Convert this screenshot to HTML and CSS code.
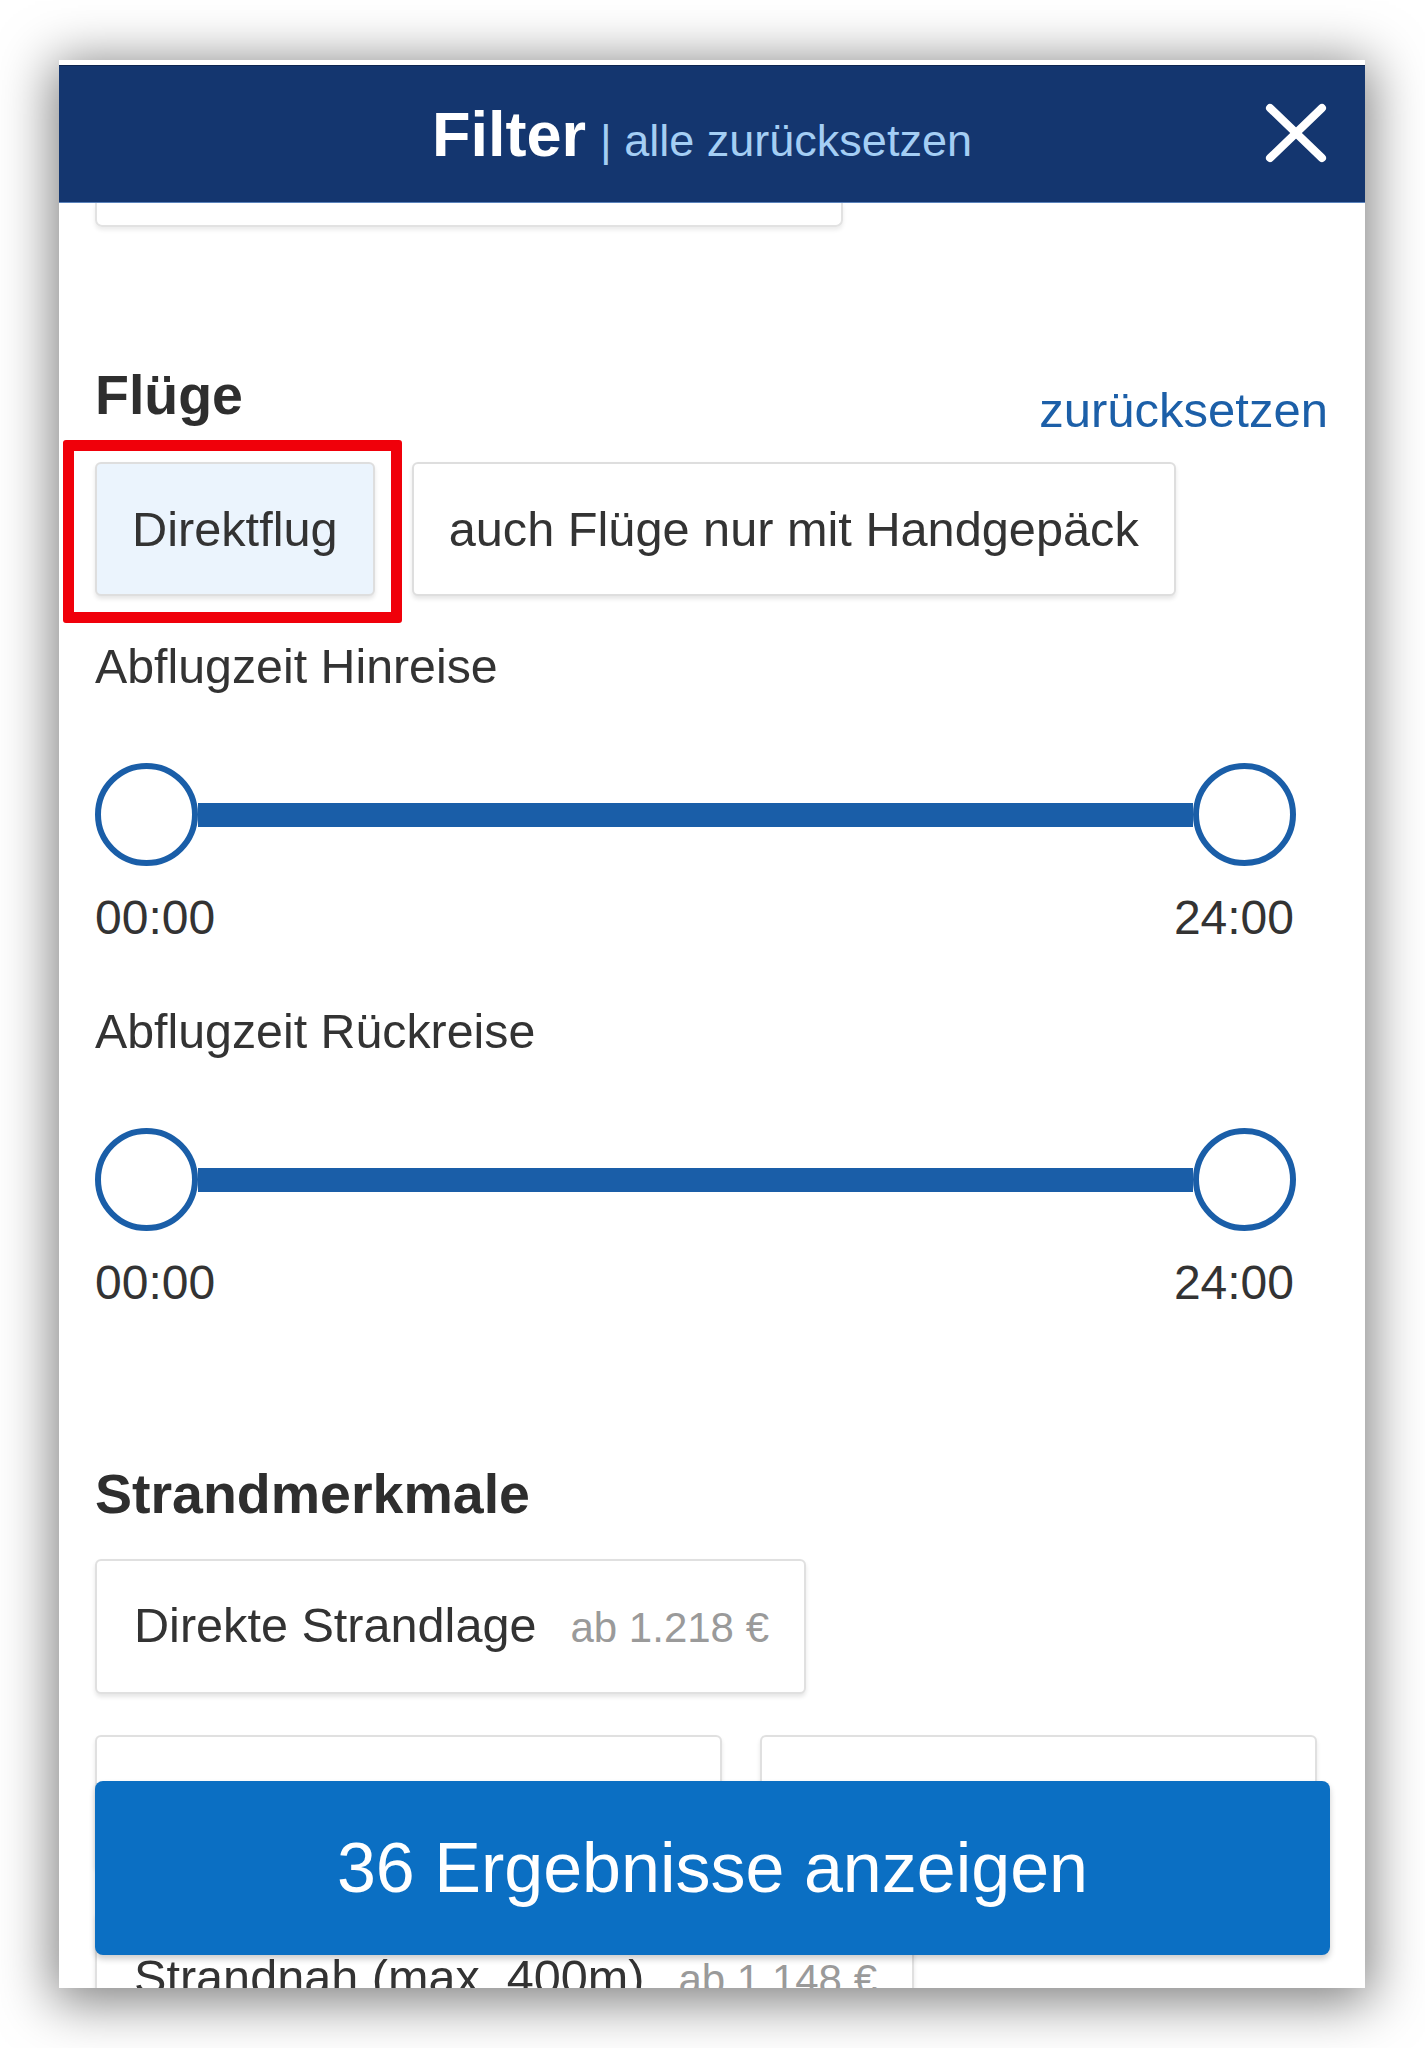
FILE: index.html
```html
<!DOCTYPE html>
<html lang="de">
<head>
<meta charset="utf-8">
<title>Filter</title>
<link rel="stylesheet" href="styles.css">
</head>
<body>
<div class="panel">
  <header class="header">
    <div class="title">
      <span class="title-main">Filter</span>
      <span class="title-sub">| alle zurücksetzen</span>
    </div>
    <svg class="close" viewBox="0 0 62 60" aria-label="Schließen">
      <line x1="5" y1="5" x2="57" y2="55" stroke="#fff" stroke-width="8" stroke-linecap="round"/>
      <line x1="57" y1="5" x2="5" y2="55" stroke="#fff" stroke-width="8" stroke-linecap="round"/>
    </svg>
  </header>
  <main class="content">
    <div class="card-stub"></div>

    <div class="section-head">
      <h2 class="section-title">Flüge</h2>
      <a class="reset">zurücksetzen</a>
    </div>
    <div class="chips">
      <div class="chip chip--active">Direktflug</div>
      <div class="chip">auch Flüge nur mit Handgepäck</div>
    </div>

    <div class="time-label">Abflugzeit Hinreise</div>
    <div class="slider">
      <div class="knob"></div>
      <div class="track"></div>
      <div class="knob"></div>
    </div>
    <div class="range"><span>00:00</span><span>24:00</span></div>

    <div class="time-label time-label--second">Abflugzeit Rückreise</div>
    <div class="slider">
      <div class="knob"></div>
      <div class="track"></div>
      <div class="knob"></div>
    </div>
    <div class="range"><span>00:00</span><span>24:00</span></div>

    <h2 class="section-title section-title--beach">Strandmerkmale</h2>
    <div class="cards">
      <div class="card"><span class="card-text">Direkte Strandlage<span class="price">ab 1.218 €</span></span></div>
      <div class="card"><span class="card-text">Flacher Strand<span class="price">ab 1.148 €</span></span></div>
      <div class="card"><span class="card-text">Sandstrand<span class="price">ab 1.148 €</span></span></div>
      <div class="card"><span class="card-text">Strandnah (max. 400m)<span class="price">ab 1.148 €</span></span></div>
    </div>
  </main>
  <button class="cta">36 Ergebnisse anzeigen</button>
</div>
</body>
</html>
```
FILE: styles.css
```css
html, body {
  margin: 0;
  background: #ffffff;
}

body {
  font-family: "Liberation Sans", Arial, Helvetica, sans-serif;
  height: 2048px;
  overflow: hidden;
}

.panel {
  margin: 60px 0 0 59px;
  width: 1306px;
  height: 1928px;
  box-sizing: border-box;
  padding-top: 5px;
  background: #ffffff;
  position: relative;
  overflow: hidden;
  display: flex;
  flex-direction: column;
  box-shadow: 0 8px 50px 6px rgba(0, 0, 0, 0.5);
}

.header {
  flex: none;
  height: 138px;
  background: #14366f;
  border-top: 1px solid #0d2550;
  box-sizing: border-box;
  border-bottom: 1px solid #5a82bb;
  display: grid;
  grid-template-columns: 1fr auto 1fr;
  align-items: center;
}

.title {
  grid-column: 2;
  display: flex;
  align-items: baseline;
  margin-right: 20px;
  white-space: nowrap;
}

.title-main {
  font-size: 63px;
  line-height: 70px;
  font-weight: 700;
  color: #ffffff;
}

.title-sub {
  margin-left: 14px;
  font-size: 45px;
  color: #a4cef4;
}

.close {
  grid-column: 3;
  justify-self: end;
  margin-right: 38px;
  margin-top: -2px;
  width: 62px;
  height: 60px;
  display: block;
}

.content {
  flex: 1;
  padding: 0 35px 0 36px;
  overflow: hidden;
}

.card-stub {
  width: 744px;
  height: 22px;
  border: 2px solid #e2e2e2;
  border-top: 0;
  border-radius: 0 0 7px 7px;
  box-shadow: 0 3px 4px rgba(0, 0, 0, 0.08);
}

.section-head {
  margin-top: 136px;
  display: flex;
  justify-content: space-between;
  align-items: flex-start;
}

.section-title {
  margin: 0;
  font-size: 55.5px;
  line-height: 64px;
  font-weight: 700;
  color: #2e2e2e;
}

.section-title--beach {
  margin-top: 152px;
}

.reset {
  margin-top: 19px;
  margin-right: 2px;
  font-size: 49px;
  line-height: 56px;
  color: #1c5fa8;
}

.chips {
  margin-top: 24px;
  display: flex;
  gap: 37px;
}

.chip {
  height: 134px;
  box-sizing: border-box;
  padding: 0 35px;
  border: 2px solid #dedede;
  border-radius: 6px;
  background: #ffffff;
  box-shadow: 0 3px 4px rgba(0, 0, 0, 0.1);
  display: flex;
  align-items: center;
  font-size: 48.7px;
  line-height: 56px;
  color: #333333;
  white-space: nowrap;
}

.chip--active {
  background: #ebf4fd;
  position: relative;
}

.chip--active::after {
  content: "";
  position: absolute;
  top: -24px;
  left: -34px;
  right: -29px;
  bottom: -29px;
  border: 11px solid #f0000a;
  border-radius: 3px;
  pointer-events: none;
}

.time-label {
  margin-top: 43px;
  font-size: 48.3px;
  line-height: 54px;
  color: #333333;
}

.time-label--second {
  margin-top: 59px;
}

.slider {
  margin-top: 70px;
  width: 1201px;
  display: flex;
  align-items: center;
}

.knob {
  flex: none;
  width: 103px;
  height: 103px;
  box-sizing: border-box;
  border: 6px solid #1a5ea8;
  border-radius: 50%;
  background: #ffffff;
}

.track {
  flex: 1;
  height: 24px;
  background: #1a5ea8;
}

.range {
  margin-top: 25px;
  width: 1199px;
  display: flex;
  justify-content: space-between;
  font-size: 48px;
  line-height: 54px;
  color: #333333;
}

.cards {
  margin-top: 33px;
  display: flex;
  flex-wrap: wrap;
  gap: 41px 38px;
}

.card {
  height: 135px;
  box-sizing: border-box;
  padding: 0 35px 0 37px;
  border: 2px solid #e0e0e0;
  border-radius: 6px;
  background: #ffffff;
  box-shadow: 0 3px 4px rgba(0, 0, 0, 0.1);
  display: flex;
  align-items: center;
  white-space: nowrap;
}

.card-text {
  font-size: 48.6px;
  line-height: 56px;
  color: #333333;
}

.price {
  margin-left: 34px;
  font-size: 42px;
  color: #9a9a9a;
}

.cta {
  position: absolute;
  left: 36px;
  right: 35px;
  bottom: 33px;
  height: 174px;
  border: 0;
  border-radius: 8px;
  background: #0b6fc3;
  box-shadow: 0 4px 6px rgba(0, 0, 0, 0.2);
  color: #ffffff;
  font-family: "Liberation Sans", Arial, Helvetica, sans-serif;
  font-size: 70px;
  line-height: 78px;
  padding: 0;
}
```
